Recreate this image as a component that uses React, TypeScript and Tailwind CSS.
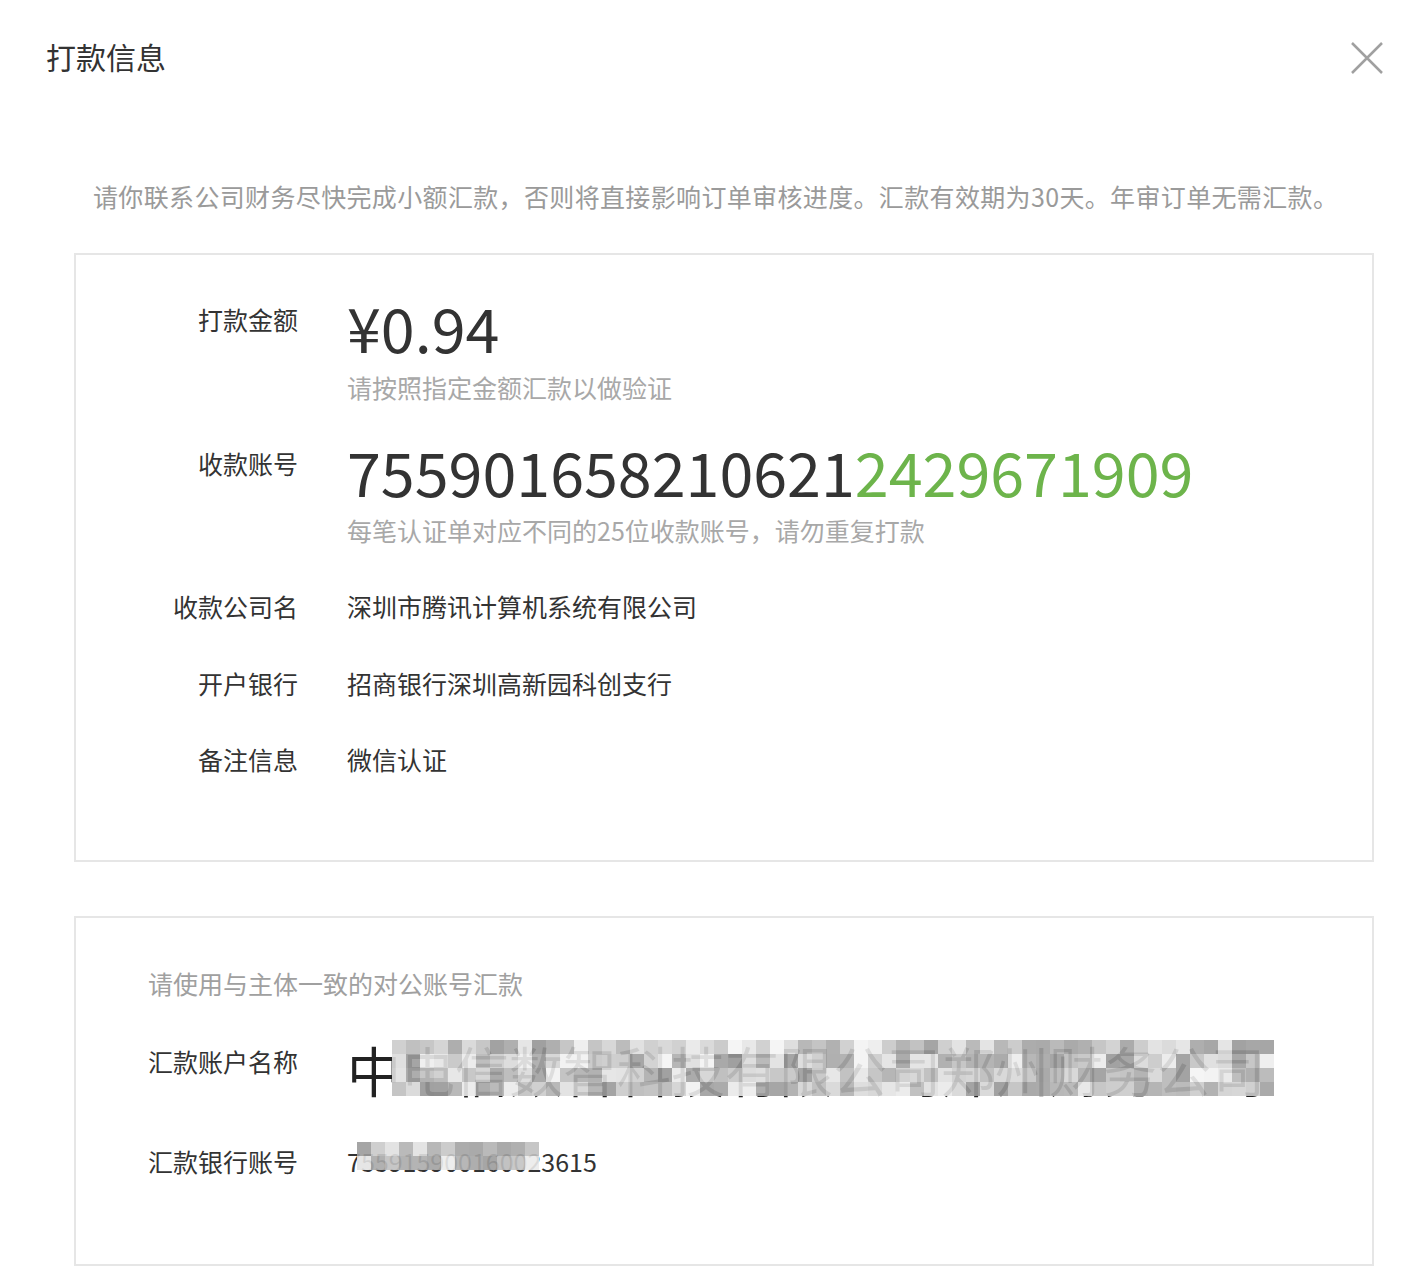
import React from 'react';

const font = { fontFamily: '"Noto Sans CJK SC", "Noto Sans", sans-serif' };

// pseudo random shades for the blurred (mosaic) areas
const shade = (i: number) => {
  const v = Math.abs(Math.sin(i * 12.9898) * 43758.5453) % 1;
  const g = Math.round(150 + v * 95);
  return `rgb(${g},${g},${g})`;
};

const Mosaic: React.FC<{ cols: number; rows: number; cell: number; seed: number }> = ({ cols, rows, cell, seed }) => (
  <div className="flex flex-col">
    {Array.from({ length: rows }).map((_, r) => (
      <div key={r} className="flex">
        {Array.from({ length: cols }).map((_, c) => (
          <div key={c} style={{ width: cell, height: cell, background: shade(seed + r * 97 + c) }} />
        ))}
      </div>
    ))}
  </div>
);

const Row: React.FC<{ label: string; children: React.ReactNode; className?: string }> = ({ label, children, className }) => (
  <div className={`flex ${className ?? ''}`}>
    <div className="w-[222px] shrink-0 text-right text-[25px] leading-[34px] text-[#333] pt-[6px]">{label}</div>
    <div className="ml-[49px] flex-1">{children}</div>
  </div>
);

const App: React.FC = () => {
  return (
    <div className="w-[1410px] min-h-[1288px] bg-white" style={font}>
      <div className="flex items-center justify-between pl-[46px] pr-[26px] pt-[36px]">
        <h2 className="text-[30px] leading-[40px] text-[#333]">打款信息</h2>
        <svg width="34" height="34" viewBox="0 0 34 34" className="mt-[4px]">
          <path d="M2 2 L32 32 M32 2 L2 32" stroke="#a0a0a0" strokeWidth="2.5" />
        </svg>
      </div>

      <p className="mt-[103px] pl-[93px] text-[25px] leading-[34px] tracking-[0.35px] text-[#9a9a9a] whitespace-nowrap">
        请你联系公司财务尽快完成小额汇款，否则将直接影响订单审核进度。汇款有效期为30天。年审订单无需汇款。
      </p>

      <div className="ml-[74px] mt-[40px] w-[1300px] border-2 border-[#e6e6e6] pt-[41px] pb-[84px]">
        <Row label="打款金额">
          <div className="text-[61px] leading-[62px] text-[#333]">¥0.94</div>
          <div className="mt-[12px] text-[25px] leading-[34px] text-[#a8a8a8]">请按照指定金额汇款以做验证</div>
        </Row>
        <Row label="收款账号" className="mt-[36px]">
          <div className="text-[61px] leading-[62px] text-[#333] whitespace-nowrap">
            755901658210621<span className="text-[#6db44b]">2429671909</span>
          </div>
          <div className="mt-[11px] text-[25px] leading-[34px] text-[#a8a8a8]">每笔认证单对应不同的25位收款账号，请勿重复打款</div>
        </Row>
        <Row label="收款公司名" className="mt-[36px]">
          <div className="pt-[6px] text-[25px] leading-[34px] text-[#333]">深圳市腾讯计算机系统有限公司</div>
        </Row>
        <Row label="开户银行" className="mt-[37px]">
          <div className="pt-[6px] text-[25px] leading-[34px] text-[#333]">招商银行深圳高新园科创支行</div>
        </Row>
        <Row label="备注信息" className="mt-[36px]">
          <div className="pt-[6px] text-[25px] leading-[34px] text-[#333]">微信认证</div>
        </Row>
      </div>

      <div className="ml-[74px] mt-[54px] w-[1300px] border-2 border-[#e6e6e6] pt-[48px] pb-[86px]">
        <div className="pl-[72px] text-[25px] leading-[34px] text-[#a0a0a0]">请使用与主体一致的对公账号汇款</div>
        <Row label="汇款账户名称" className="mt-[38px]">
          <div className="relative">
            <div className="text-[54px] leading-[64px] text-[#222] whitespace-nowrap">中电信数智科技有限公司郑州财务公司</div>
            <div className="absolute left-[45px] top-[2px] opacity-90">
              <Mosaic cols={63} rows={4} cell={14} seed={3} />
            </div>
          </div>
        </Row>
        <Row label="汇款银行账号" className="mt-[36px]">
          <div className="relative pt-[6px]">
            <div className="text-[25px] leading-[34px] text-[#333] whitespace-nowrap">755915900160023615</div>
            <div className="absolute left-[10px] top-[4px] opacity-90">
              <Mosaic cols={13} rows={2} cell={14} seed={41} />
            </div>
          </div>
        </Row>
      </div>
    </div>
  );
};

export default App;
